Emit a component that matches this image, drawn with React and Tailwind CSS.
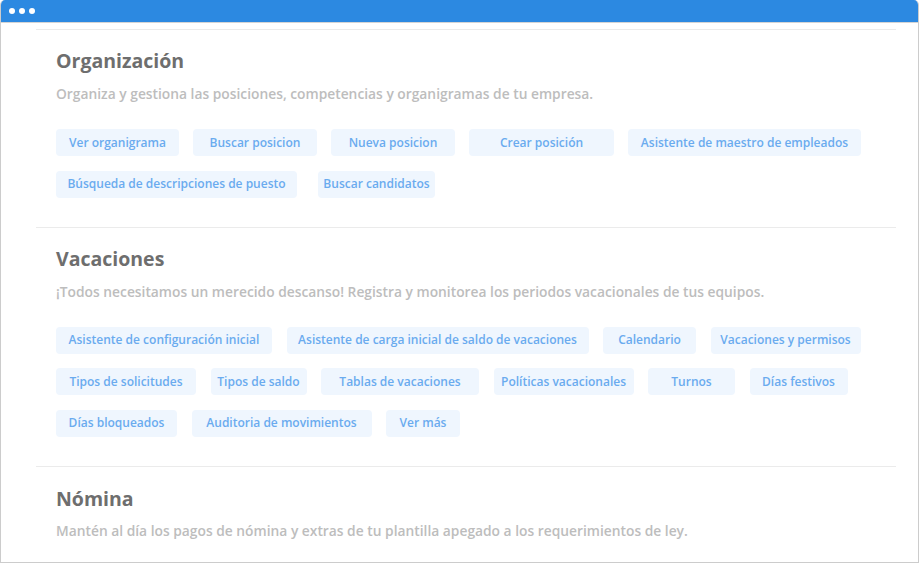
import React from 'react';

const font = { fontFamily: '"Open Sans", "Noto Sans", sans-serif' };

const sections = [
  {
    title: 'Organización',
    gap: 'gap-[14px]',
    desc: 'Organiza y gestiona las posiciones, competencias y organigramas de tu empresa.',
    rows: [
      [
        ['Ver organigrama', 'w-[123px]'],
        ['Buscar posicion', 'w-[124px]'],
        ['Nueva posicion', 'w-[124px]'],
        ['Crear posición', 'w-[145px]'],
        ['Asistente de maestro de empleados', 'w-[233px]'],
      ],
      [
        ['Búsqueda de descripciones de puesto', 'w-[241px]'],
        ['Buscar candidatos', 'w-[117px] ml-[7px]'],
      ],
    ],
  },
  {
    title: 'Vacaciones',
    gap: 'gap-[14.5px]',
    desc: '¡Todos necesitamos un merecido descanso! Registra y monitorea los periodos vacacionales de tus equipos.',
    rows: [
      [
        ['Asistente de configuración inicial', 'w-[216px]'],
        ['Asistente de carga inicial de saldo de vacaciones', 'w-[302px]'],
        ['Calendario', 'w-[93px]'],
        ['Vacaciones y permisos', 'w-[150px]'],
      ],
      [
        ['Tipos de solicitudes', 'w-[140px]'],
        ['Tipos de saldo', 'w-[96px]'],
        ['Tablas de vacaciones', 'w-[158px]'],
        ['Políticas vacacionales', 'w-[140px]'],
        ['Turnos', 'w-[87px]'],
        ['Días festivos', 'w-[98px]'],
      ],
      [
        ['Días bloqueados', 'w-[121px]'],
        ['Auditoria de movimientos', 'w-[180px]'],
        ['Ver más', 'w-[74px]'],
      ],
    ],
  },
];

function Chip({ label, cls }) {
  return (
    <button
      className={`h-[27px] rounded-[4px] bg-[#eff6fe] text-[12px] font-semibold text-[#6aabef] flex items-center justify-center whitespace-nowrap ${cls}`}
    >
      {label}
    </button>
  );
}

function Section({ s }) {
  return (
    <section className="border-t border-[#ebebeb] pl-5 pt-[19px] pb-[29px]">
      <h2 className="text-[19.5px] leading-[24px] font-bold text-[#6e6e6e]">{s.title}</h2>
      <p className="mt-[11px] text-[13.8px] leading-[20px] font-semibold text-[#bdbdbd]">{s.desc}</p>
      <div className="mt-[25px] flex flex-col gap-[14.5px]">
        {s.rows.map((row, i) => (
          <div key={i} className={`flex ${s.gap}`}>
            {row.map(([label, cls]) => (
              <Chip key={label} label={label} cls={cls} />
            ))}
          </div>
        ))}
      </div>
    </section>
  );
}

export default function App() {
  return (
    <div className="w-[920px] h-[563px] bg-white" style={font}>
      <div className="w-[919px] h-[563px] flex flex-col border-x border-b border-[#cccccc] rounded-t-[5px] overflow-hidden">
        <div className="h-[23px] bg-[#2c89e1] border-b border-[#d4d4d4] flex items-center gap-[4px] pl-[8px] shrink-0">
          <span className="w-[6px] h-[6px] rounded-full bg-white" />
          <span className="w-[6px] h-[6px] rounded-full bg-white" />
          <span className="w-[6px] h-[6px] rounded-full bg-white" />
        </div>
        <div className="ml-[35px] w-[860px] mt-[6px] flex-1 overflow-hidden">
          {sections.map((s) => (
            <Section key={s.title} s={s} />
          ))}
          <section className="border-t border-[#ebebeb] pl-5 pt-[20px]">
            <h2 className="text-[19.5px] leading-[24px] font-bold text-[#6e6e6e]">Nómina</h2>
            <p className="mt-[10px] text-[13.8px] leading-[20px] font-semibold text-[#bdbdbd]">
              Mantén al día los pagos de nómina y extras de tu plantilla apegado a los requerimientos de ley.
            </p>
          </section>
        </div>
      </div>
    </div>
  );
}
